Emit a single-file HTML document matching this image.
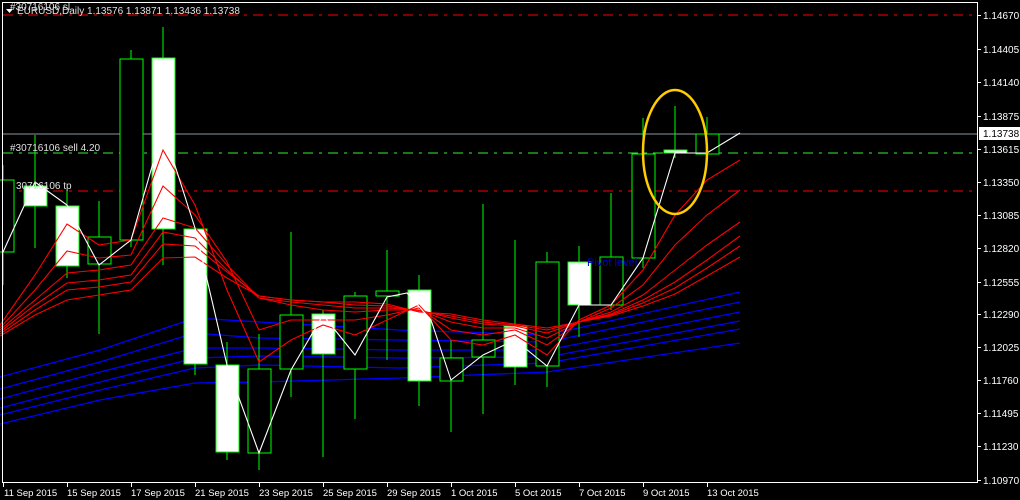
<!DOCTYPE html>
<html><head><meta charset="utf-8"><style>
html,body{margin:0;padding:0;background:#000;}
svg{display:block;font-family:"Liberation Sans",sans-serif;}
</style></head><body>
<svg width="1020" height="500" viewBox="0 0 1020 500" xmlns="http://www.w3.org/2000/svg">
<rect width="1020" height="500" fill="#000"/>
<line x1="3" y1="15" x2="972" y2="15" stroke="#ff0000" stroke-dasharray="10,6,3,6" shape-rendering="crispEdges"/>
<line x1="3" y1="134" x2="977" y2="134" stroke="#8c96a0" shape-rendering="crispEdges"/>
<line x1="3" y1="153" x2="972" y2="153" stroke="#33ee33" stroke-dasharray="10,6,3,6" shape-rendering="crispEdges"/>
<line x1="3" y1="191" x2="972" y2="191" stroke="#ff0000" stroke-dasharray="10,6,3,6" shape-rendering="crispEdges"/>

<g fill="none" stroke="#0000ff" stroke-width="1.3">
<polyline points="0,377 100,350 195,318 260,322 400,330 547,335 740,292"/>
<polyline points="0,389 100,362 195,333 260,338 400,340 547,342 740,302"/>
<polyline points="0,399 100,372 195,348 260,348 400,350 547,350 740,312"/>
<polyline points="0,408 100,382 195,358 260,356 400,358 547,357 740,321"/>
<polyline points="0,415 100,390 195,368 260,365 400,368 547,363 740,329"/>
<polyline points="0,424 100,400 195,383 260,382 400,378 547,372 740,343"/>
</g>

<g stroke="#00ff00" stroke-width="1" shape-rendering="crispEdges">
<line x1="3" y1="165" x2="3" y2="285"/><rect x="-8" y="180" width="22" height="72" fill="#000"/>
<line x1="35" y1="135" x2="35" y2="248"/><rect x="24" y="186" width="23" height="20" fill="#fff"/>
<line x1="67" y1="190" x2="67" y2="278"/><rect x="56" y="206" width="23" height="60" fill="#fff"/>
<line x1="99" y1="201" x2="99" y2="334"/><rect x="88" y="237" width="23" height="27" fill="#000"/>
<line x1="131" y1="50" x2="131" y2="247"/><rect x="120" y="59" width="23" height="181" fill="#000"/>
<line x1="163" y1="27" x2="163" y2="265"/><rect x="152" y="58" width="23" height="171" fill="#fff"/>
<line x1="195" y1="229" x2="195" y2="375"/><rect x="184" y="229" width="23" height="135" fill="#fff"/>
<line x1="227" y1="342" x2="227" y2="460"/><rect x="216" y="365" width="23" height="87" fill="#fff"/>
<line x1="259" y1="334" x2="259" y2="470"/><rect x="248" y="369" width="23" height="84" fill="#000"/>
<line x1="291" y1="232" x2="291" y2="397"/><rect x="280" y="315" width="23" height="54" fill="#000"/>
<line x1="323" y1="310" x2="323" y2="457"/><rect x="312" y="314" width="23" height="40" fill="#fff"/>
<line x1="355" y1="292" x2="355" y2="419"/><rect x="344" y="296" width="23" height="73" fill="#000"/>
<line x1="387" y1="250" x2="387" y2="360"/><rect x="376" y="291" width="23" height="5" fill="#000"/>
<line x1="419" y1="275" x2="419" y2="406"/><rect x="408" y="290" width="23" height="91" fill="#fff"/>
<line x1="451" y1="340" x2="451" y2="432"/><rect x="440" y="358" width="23" height="23" fill="#000"/>
<line x1="483" y1="204" x2="483" y2="414"/><rect x="472" y="340" width="23" height="17" fill="#000"/>
<line x1="515" y1="240" x2="515" y2="385"/><rect x="504" y="326" width="23" height="41" fill="#fff"/>
<line x1="547" y1="252" x2="547" y2="387"/><rect x="536" y="262" width="23" height="104" fill="#000"/>
<line x1="579" y1="246" x2="579" y2="337"/><rect x="568" y="262" width="23" height="43" fill="#fff"/>
<line x1="611" y1="193" x2="611" y2="310"/><rect x="600" y="257" width="23" height="48" fill="#000"/>
<line x1="643" y1="118" x2="643" y2="268"/><rect x="632" y="154" width="23" height="104" fill="#000"/>
<line x1="675" y1="106" x2="675" y2="158"/><rect x="664" y="150" width="23" height="3" fill="#fff"/>
<line x1="707" y1="117" x2="707" y2="154"/><rect x="696" y="134" width="23" height="20" fill="#000"/>
</g>

<g fill="none" stroke="#ff0000" stroke-width="1.1">
<polyline points="0,325 35,275 67,224 99,245 131,240 163,150 195,205 227,290 259,362 291,340 323,325 355,335 387,320 419,305 451,340 483,345 515,335 547,355 579,320 611,305 643,270 675,215 707,180 740,160"/>
<polyline points="0,328 35,290 67,251 99,258 131,255 163,186 195,215 227,262 259,330 291,320 323,320 355,320 387,315 419,308 451,330 483,335 515,330 547,345 579,322 611,308 643,285 675,245 707,215 740,190"/>
<polyline points="0,330 35,300 67,273 99,270 131,265 163,218 195,228 227,265 259,298 291,305 323,310 355,312 387,310 419,310 451,322 483,328 515,328 547,338 579,322 611,312 643,295 675,270 707,245 740,222"/>
<polyline points="0,332 35,305 67,283 99,280 131,275 163,232 195,238 227,270 259,298 291,302 323,305 355,308 387,308 419,310 451,318 483,324 515,326 547,333 579,322 611,314 643,300 675,282 707,260 740,236"/>
<polyline points="0,334 35,310 67,290 99,287 131,282 163,244 195,246 227,272 259,296 291,300 323,302 355,305 387,306 419,311 451,316 483,322 515,325 547,330 579,322 611,315 643,303 675,288 707,268 740,246"/>
<polyline points="0,336 35,315 67,300 99,295 131,290 163,258 195,257 227,278 259,296 291,300 323,302 355,302 387,304 419,312 451,314 483,320 515,324 547,328 579,322 611,316 643,306 675,294 707,276 740,257"/>
</g>

<polyline fill="none" stroke="#fff" stroke-width="1.1" points="3,252 35,182 67,205 99,265 131,240 163,128 195,228 227,365 259,453 291,370 323,315 355,355 387,297 407,293 431,320 451,380 483,355 515,340 547,366 579,305 611,305 643,258 675,153 707,153 740,133"/>

<ellipse cx="675" cy="152" rx="32" ry="62" fill="none" stroke="#ffcc00" stroke-width="2.5"/>

<text x="587" y="266" font-size="11" fill="#0000cc">Pivot level</text>
<text x="10" y="151" font-size="10" fill="#e0e0e0">#30716106 sell 4.20</text>
<text x="16" y="189" font-size="10" fill="#e0e0e0">30716106 tp</text>
<text x="10" y="10" font-size="10" fill="#e0e0e0">#30716106 sl</text>
<path d="M6,9 L13,9 L9.5,13 Z" fill="#fff"/>
<text x="17" y="14" font-size="10" fill="#e0e0e0">EURUSD,Daily  1.13576 1.13871 1.13436 1.13738</text>

<g stroke="#fff" shape-rendering="crispEdges">
<line x1="2.5" y1="2" x2="2.5" y2="482"/>
<line x1="2" y1="2.5" x2="978" y2="2.5"/>
<line x1="977.5" y1="2" x2="977.5" y2="482"/>
<line x1="2" y1="482.5" x2="978" y2="482.5"/>
</g>

<g fill="#fff" font-size="10">
<g stroke="#fff" shape-rendering="crispEdges">
<line x1="978" y1="15.5" x2="981" y2="15.5"/><line x1="978" y1="49.5" x2="981" y2="49.5"/><line x1="978" y1="82.5" x2="981" y2="82.5"/><line x1="978" y1="116.5" x2="981" y2="116.5"/><line x1="978" y1="149.5" x2="981" y2="149.5"/><line x1="978" y1="182.5" x2="981" y2="182.5"/><line x1="978" y1="215.5" x2="981" y2="215.5"/><line x1="978" y1="248.5" x2="981" y2="248.5"/><line x1="978" y1="282.5" x2="981" y2="282.5"/><line x1="978" y1="314.5" x2="981" y2="314.5"/><line x1="978" y1="347.5" x2="981" y2="347.5"/><line x1="978" y1="380.5" x2="981" y2="380.5"/><line x1="978" y1="413.5" x2="981" y2="413.5"/><line x1="978" y1="446.5" x2="981" y2="446.5"/><line x1="978" y1="480.5" x2="981" y2="480.5"/>
</g>
<text x="983" y="19">1.14670</text>
<text x="983" y="53">1.14405</text>
<text x="983" y="86">1.14140</text>
<text x="983" y="120">1.13875</text>
<text x="983" y="153">1.13615</text>
<text x="983" y="186">1.13350</text>
<text x="983" y="219">1.13085</text>
<text x="983" y="252">1.12820</text>
<text x="983" y="286">1.12555</text>
<text x="983" y="318">1.12290</text>
<text x="983" y="351">1.12025</text>
<text x="983" y="384">1.11760</text>
<text x="983" y="417">1.11495</text>
<text x="983" y="450">1.11230</text>
<text x="983" y="484">1.10970</text>
<rect x="979" y="127" width="41" height="13" fill="#fff"/>
<text x="983" y="137" fill="#000">1.13738</text>
</g>

<g stroke="#fff" shape-rendering="crispEdges">
<line x1="3.5" y1="482" x2="3.5" y2="487"/><line x1="67.5" y1="482" x2="67.5" y2="487"/><line x1="131.5" y1="482" x2="131.5" y2="487"/><line x1="195.5" y1="482" x2="195.5" y2="487"/><line x1="259.5" y1="482" x2="259.5" y2="487"/><line x1="323.5" y1="482" x2="323.5" y2="487"/><line x1="387.5" y1="482" x2="387.5" y2="487"/><line x1="451.5" y1="482" x2="451.5" y2="487"/><line x1="515.5" y1="482" x2="515.5" y2="487"/><line x1="579.5" y1="482" x2="579.5" y2="487"/><line x1="643.5" y1="482" x2="643.5" y2="487"/><line x1="707.5" y1="482" x2="707.5" y2="487"/>
</g>
<g fill="#fff" font-size="9.5">
<text x="4" y="496">11 Sep 2015</text>
<text x="67" y="496">15 Sep 2015</text>
<text x="131" y="496">17 Sep 2015</text>
<text x="195" y="496">21 Sep 2015</text>
<text x="259" y="496">23 Sep 2015</text>
<text x="323" y="496">25 Sep 2015</text>
<text x="387" y="496">29 Sep 2015</text>
<text x="451" y="496">1 Oct 2015</text>
<text x="515" y="496">5 Oct 2015</text>
<text x="579" y="496">7 Oct 2015</text>
<text x="643" y="496">9 Oct 2015</text>
<text x="707" y="496">13 Oct 2015</text>
</g>
</svg>
</body></html>
